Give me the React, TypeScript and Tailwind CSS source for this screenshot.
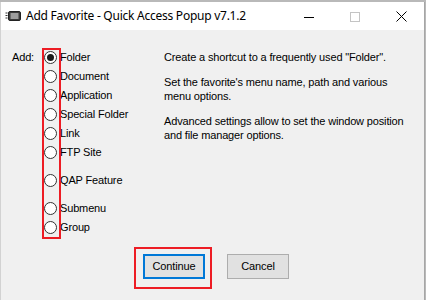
const options = [
  { label: "Folder", checked: true },
  { label: "Document" },
  { label: "Application" },
  { label: "Special Folder" },
  { label: "Link" },
  { label: "FTP Site" },
  { label: "QAP Feature", gap: true },
  { label: "Submenu", gap: true },
  { label: "Group" },
]

const Radio = ({ checked }: { checked?: boolean }) => (
  <span className="flex h-[13px] w-[13px] shrink-0 items-center justify-center rounded-full border border-[#333333] bg-white">
    {checked && <span className="h-[7px] w-[7px] rounded-full bg-[#1a1a1a]" />}
  </span>
)

const AppIcon = () => (
  <svg width="16" height="16" viewBox="0 0 16 16" className="shrink-0">
    <path d="M0.5 5h2M0.5 7.5h2M0.5 10h2" stroke="#333" strokeWidth="1" />
    <rect x="3.5" y="3.5" width="12" height="9" rx="1.5" fill="#3a3a3a" stroke="#222" />
    <path d="M5.5 6h8M5.5 8h8M5.5 10h8" stroke="#ffffff" strokeWidth="1" />
  </svg>
)

export default function App() {
  return (
    <div className="h-[300px] w-[426px] overflow-hidden bg-[#b9b9b9] pt-[2px] font-['Liberation_Sans',Arial,sans-serif] text-black">
      <div className="flex h-[298px] w-[425px] flex-col border-l border-r border-l-[#d2d2d2] border-r-[#a6a6a6]">
        {/* title bar */}
        <div className="flex h-[28px] shrink-0 items-center bg-white">
          <div className="ml-[4px]">
            <AppIcon />
          </div>
          <span className="ml-[5px] font-['Noto_Sans',sans-serif] text-[12px] leading-none tracking-[-0.25px] text-black">
            Add Favorite - Quick Access Popup v7.1.2
          </span>
          <div className="ml-auto flex h-full">
            <div className="flex w-[46px] items-center justify-center">
              <span className="mt-[2px] h-px w-[10px] bg-black" />
            </div>
            <div className="flex w-[46px] items-center justify-center">
              <span className="mt-[2px] h-[10px] w-[10px] border border-[#c4c4c4]" />
            </div>
            <div className="flex w-[46px] items-center justify-center">
              <svg width="11" height="11" viewBox="0 0 11 11" className="mt-[1px]">
                <path d="M0.5 0.5l10 10M10.5 0.5l-10 10" stroke="#000" strokeWidth="1" />
              </svg>
            </div>
          </div>
        </div>

        {/* client area */}
        <div className="relative flex-1 bg-[#f0f0f0] text-[11px] tracking-[-0.15px]">
          <div className="flex pt-[18px]">
            <div className="w-[43px] pl-[11px] leading-[19px]">Add:</div>
            <div className="flex w-[120px] flex-col">
              {options.map((o) => (
                <div
                  key={o.label}
                  className={`flex h-[19px] items-center gap-[3px] ${o.gap ? "mt-[9px]" : ""}`}
                >
                  <Radio checked={o.checked} />
                  <span className="leading-none">{o.label}</span>
                </div>
              ))}
            </div>
            <div className="flex flex-col gap-[11px] pt-[2px] leading-[14px]">
              <p>Create a shortcut to a frequently used "Folder".</p>
              <p>
                Set the favorite's menu name, path and various
                <br />
                menu options.
              </p>
              <p>
                Advanced settings allow to set the window position
                <br />
                and file manager options.
              </p>
            </div>
          </div>

          <div className="mt-[17px] flex gap-[22px] pl-[142px]">
            <button className="h-[25px] w-[62px] border-2 border-[#0078d7] bg-[#e1e1e1] text-[11px] tracking-[-0.15px]">
              Continue
            </button>
            <button className="h-[25px] w-[62px] border border-[#adadad] bg-[#e1e1e1] text-[11px] tracking-[-0.15px]">
              Cancel
            </button>
          </div>

          {/* red annotation boxes */}
          <div className="pointer-events-none absolute left-[41px] top-[18px] h-[191px] w-[19px] border-2 border-[#ed1c24]" />
          <div className="pointer-events-none absolute left-[133px] top-[217px] h-[42px] w-[78px] border-2 border-[#ed1c24]" />
        </div>
      </div>
    </div>
  )
}
